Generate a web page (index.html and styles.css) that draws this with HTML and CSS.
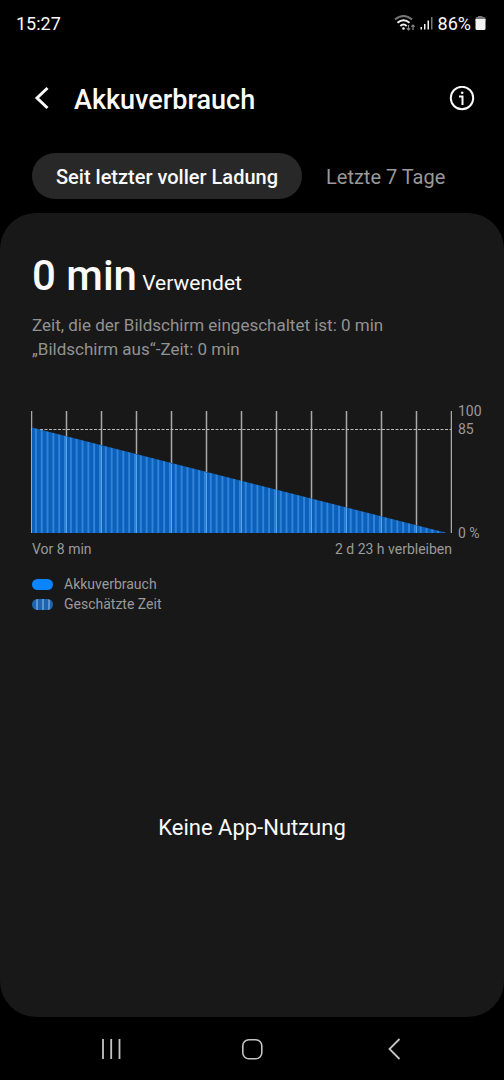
FILE: index.html
```html
<!DOCTYPE html>
<html lang="de">
<head>
<meta charset="utf-8">
<meta name="viewport" content="width=device-width, initial-scale=1">
<title>Akkuverbrauch</title>
<link rel="stylesheet" href="styles.css">
</head>
<body>
<div class="status">
  <span class="clock">15:27</span>
  <div class="status-icons">
    <svg class="wifi" width="22" height="18" viewBox="0 0 22 18" fill="none" stroke-width="1.900">
      <path d="M1 5.500Q9.500 -1.500 18 5.500" stroke="#777"/>
      <path d="M3.500 8.800Q9.500 3.500 15.500 8.800M6.300 12Q9.500 9 12.700 12" stroke="#f2f2f2"/>
      <circle cx="9.500" cy="14.500" r="1.300" fill="#f2f2f2"/>
      <path d="M14.500 11v5M12.800 14.300 14.500 16l1.700-1.700M19 16v-5M17.300 12.700 19 11l1.700 1.700" stroke="#888" stroke-width="1.200"/>
    </svg>
    <svg width="14" height="16" viewBox="0 0 14 16">
      <path d="M.5 12H2v2.500H.5zM4 9h1.500v5.500H4zM7.500 5.500H9v9H7.500z" fill="#f2f2f2"/>
      <path d="M11 2h1.500v12.500H11z" fill="#777"/>
    </svg>
    <span class="percent">86%</span>
    <svg width="11" height="16" viewBox="0 0 11 16">
      <path d="M3 2V1h4.500v1H9q1.500 0 1.500 1.500V6H.5V3.500Q.5 2 2 2z" fill="#777"/>
      <path d="M.5 4h10v9.500q0 1.500-1.500 1.500H2Q.5 15 .5 13.500z" fill="#f2f2f2"/>
    </svg>
  </div>
</div>
<header class="header">
  <button class="icon-button" aria-label="Zurück">
    <svg width="20" height="26" viewBox="0 0 20 26" fill="none" stroke="#fafafa" stroke-width="3"><path d="M15.500 2 5 12l10.500 10"/></svg>
  </button>
  <h1>Akkuverbrauch</h1>
  <button class="icon-button" aria-label="Informationen">
    <svg width="26" height="26" viewBox="0 0 26 26" fill="none" stroke="#fafafa" stroke-width="2"><circle cx="13" cy="12" r="11.200"/><path d="M10 10.500h3.500V19"/><circle cx="13.200" cy="6.700" r="1.300" fill="#fafafa" stroke="none"/></svg>
  </button>
</header>
<nav class="tabs">
  <button class="tab tab-active">Seit letzter voller Ladung</button>
  <button class="tab">Letzte 7 Tage</button>
</nav>
<main class="card">
  <p class="usage"><strong>0 min</strong> <span>Verwendet</span></p>
  <p class="details">Zeit, die der Bildschirm eingeschaltet ist: 0 min<br>„Bildschirm aus“-Zeit: 0 min</p>
  <section class="chart">
    <svg class="plot" viewBox="0 0 421 122" role="img" aria-label="Akkuverlauf">
      <defs>
        <pattern id="stripes" width="5.830" height="122" patternUnits="userSpaceOnUse">
          <rect width="5.830" height="122" fill="#0a60ba"/>
          <rect x="4" width="1.800" height="122" fill="#3285d8"/>
        </pattern>
      </defs>
      <path class="grid-lines" d="M.5 0v122M35.500 0v122M70.500 0v122M105.500 0v122M140.500 0v122M175.500 0v122M210.500 0v122M245.500 0v122M280.500 0v122M315.500 0v122M350.500 0v122M385.500 0v122M420.500 0v122"/>
      <path d="M0 18.500H420" stroke="#bcbcbc" stroke-dasharray="3 1.500"/>
      <path d="M1 16.500 416 122H1z" fill="url(#stripes)"/>
      <path class="grid-faint" d="M35.500 26v96M70.500 35v87M105.500 44v78M140.500 53v69M175.500 62v60M210.500 70v52M245.500 79v43M280.500 88v34M315.500 97v25M350.500 106v16M385.500 115v7"/>
    </svg>
    <div class="scale"><span>100</span><span>85</span><span class="zero">0 %</span></div>
    <div class="range"><span>Vor 8 min</span><span>2 d 23 h verbleiben</span></div>
  </section>
  <ul class="legend">
    <li><i class="swatch"></i>Akkuverbrauch</li>
    <li><i class="swatch swatch-striped"></i>Geschätzte Zeit</li>
  </ul>
  <p class="empty">Keine App-Nutzung</p>
</main>
<nav class="navbar">
  <button aria-label="Letzte Apps"><svg width="24" height="24" viewBox="0 0 24 24" fill="none" stroke="#c4c4c4" stroke-width="1.800"><path d="M4 2v20M12.200 2v20M20.500 2v20"/></svg></button>
  <button aria-label="Startbildschirm"><svg width="24" height="24" viewBox="0 0 24 24" fill="none" stroke="#c4c4c4" stroke-width="1.600"><rect x="2.800" y="2.800" width="19" height="19" rx="6"/></svg></button>
  <button aria-label="Zurück"><svg width="24" height="24" viewBox="0 0 24 24" fill="none" stroke="#c4c4c4" stroke-width="1.800"><path d="M18.500 2 8.500 12l10 10"/></svg></button>
</nav>
</body>
</html>
```

FILE: styles.css
```css
* { box-sizing: border-box; }
body {
  margin: 0;
  min-height: 100vh;
  display: flex;
  flex-direction: column;
  background: #000;
  color: #fafafa;
  font-family: Roboto, sans-serif;
}
h1, p, ul { margin: 0; padding: 0; }
button {
  border: 0;
  padding: 0;
  background: none;
  color: inherit;
  font: inherit;
}
svg { display: block; }
.status {
  display: flex;
  justify-content: space-between;
  align-items: center;
  height: 46px;
  padding: 0 18px 0 16px;
  font-size: 18px;
}
.status-icons { display: flex; align-items: center; gap: 4px; }
.header {
  display: flex;
  align-items: center;
  height: 106px;
  padding: 0 29px 0 32px;
}
.header h1 {
  flex: 1;
  padding: 2px 0 0 22px;
  font-size: 27px;
  line-height: 32px;
  font-weight: 500;
}
.tabs { display: flex; padding: 1px 32px 14px; }
.tab {
  height: 46px;
  padding: 2px 24px 0;
  border-radius: 23px;
  color: #999;
  font-size: 20px;
  white-space: nowrap;
}
.tab-active {
  background: #282828;
  color: #fafafa;
  font-weight: 500;
}
.card {
  flex: 1;
  display: flex;
  flex-direction: column;
  padding: 36px 32px 0;
  border-radius: 36px;
  background: #181818;
}
.usage { font-size: 21px; line-height: 54px; }
.usage strong { font-size: 42px; font-weight: 500; }
.details {
  padding-top: 3px;
  color: #929292;
  font-size: 17px;
  line-height: 24px;
}
.chart {
  display: grid;
  grid-template-columns: 1fr 40px;
  margin: 50px -20px 0 -1px;
  color: #9a9a9a;
  font-size: 14px;
}
.plot { width: 100%; height: auto; }
.grid-lines { stroke: #a8a8a8; stroke-width: 1.5px; }
.grid-faint { stroke: #5aa4e8; stroke-width: 1px; }
.scale {
  display: flex;
  flex-direction: column;
  margin: -9px 0;
  padding-left: 6px;
  line-height: 18px;
}
.zero { margin-top: auto; }
.range {
  display: flex;
  justify-content: space-between;
  padding: 7px 0 0 1px;
  line-height: 18px;
}
.legend {
  padding-top: 16px;
  list-style: none;
  color: #9a9a9a;
  font-size: 14px;
  line-height: 20px;
}
.legend li { display: flex; align-items: center; gap: 11px; }
.swatch {
  width: 21px;
  height: 11px;
  border-radius: 6px;
  background: #0a84ff;
}
.swatch-striped {
  background: repeating-linear-gradient(90deg, #1f64ae 0 4px, #5a96d2 4px 6px);
}
.empty {
  margin: auto;
  padding-top: 24px;
  font-size: 22px;
  line-height: 28px;
}
.navbar {
  display: flex;
  justify-content: space-around;
  align-items: center;
  height: 63px;
  padding: 0 40px;
}
```
